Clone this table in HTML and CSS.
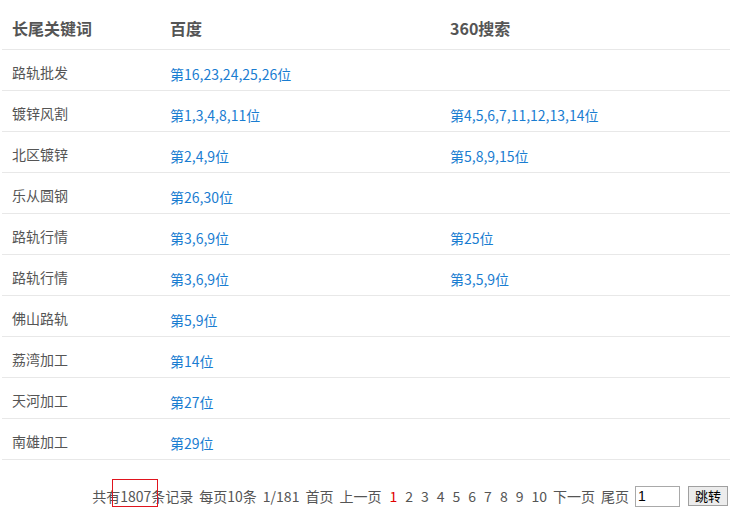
FILE: index.html
```html
<!DOCTYPE html>
<html>
<head>
    <title>长尾关键词排名</title>
    <meta charset="utf-8">
    <link rel="stylesheet" href="styles.css">
</head>
<body>
<table class="rank">
    <thead>
        <tr>
            <th class="col-key">长尾关键词</th>
            <th class="col-bd">百度</th>
            <th class="col-so">360搜索</th>
        </tr>
    </thead>
    <tbody>
        <tr><td>路轨批发</td><td><a href="#">第16,23,24,25,26位</a></td><td></td></tr>
        <tr><td>镀锌风割</td><td><a href="#">第1,3,4,8,11位</a></td><td><a href="#">第4,5,6,7,11,12,13,14位</a></td></tr>
        <tr><td>北区镀锌</td><td><a href="#">第2,4,9位</a></td><td><a href="#">第5,8,9,15位</a></td></tr>
        <tr><td>乐从圆钢</td><td><a href="#">第26,30位</a></td><td></td></tr>
        <tr><td>路轨行情</td><td><a href="#">第3,6,9位</a></td><td><a href="#">第25位</a></td></tr>
        <tr><td>路轨行情</td><td><a href="#">第3,6,9位</a></td><td><a href="#">第3,5,9位</a></td></tr>
        <tr><td>佛山路轨</td><td><a href="#">第5,9位</a></td><td></td></tr>
        <tr><td>荔湾加工</td><td><a href="#">第14位</a></td><td></td></tr>
        <tr><td>天河加工</td><td><a href="#">第27位</a></td><td></td></tr>
        <tr><td>南雄加工</td><td><a href="#">第29位</a></td><td></td></tr>
    </tbody>
</table>

<div class="pager">
    <span>共有<span class="total">1807</span>条记录</span>
    <span>每页10条</span>
    <span>1/181</span>
    <a href="#">首页</a>
    <a href="#">上一页</a>
    <span class="num cur">1</span>
    <a class="num" href="#">2</a>
    <a class="num" href="#">3</a>
    <a class="num" href="#">4</a>
    <a class="num" href="#">5</a>
    <a class="num" href="#">6</a>
    <a class="num" href="#">7</a>
    <a class="num" href="#">8</a>
    <a class="num" href="#">9</a>
    <a class="num" href="#">10</a>
    <a href="#">下一页</a>
    <a href="#">尾页</a>
    <input type="text" class="go-page" value="1">
    <button class="go-btn">跳转</button>
</div>
</body>
</html>
```

FILE: styles.css
```css
* {
    box-sizing: border-box;
}

body {
    margin: 0;
    padding: 0 13px 0 2px;
    font-family: "Noto Sans CJK SC", "Open Sans", sans-serif;
    color: #555;
    background: #fff;
}

.rank {
    width: 728px;
    border-collapse: collapse;
}

.rank th,
.rank td {
    text-align: left;
    padding: 0 10px;
    border-bottom: 1px solid #e8e8e8;
}

.rank th {
    height: 49px;
    font-size: 16px;
    font-weight: bold;
    color: #555;
    padding-top: 8px;
}

.col-key {
    width: 158px;
}

.col-bd {
    width: 280px;
}

.rank td {
    height: 41px;
    font-size: 14px;
    color: #555;
    padding-top: 5px;
}

.rank td a {
    display: inline-block;
    padding-top: 4px;
    font-size: 14px;
    color: #1a7dd1;
    text-decoration: none;
}

.pager {
    margin-top: 26px;
    display: flex;
    justify-content: flex-end;
    align-items: center;
    font-size: 14px;
    color: #555;
    white-space: nowrap;
}

.pager > * {
    margin-left: 6px;
}

.pager > :first-child {
    margin-left: 0;
}

.pager .num {
    margin-left: 8px;
}

.pager a {
    color: #555;
    text-decoration: none;
}

.pager .cur {
    color: #e10000;
}

/* red marker drawn over the record count */
.total {
    position: relative;
}

.total::after {
    content: "";
    position: absolute;
    left: -8px;
    top: -7px;
    width: 44px;
    height: 26px;
    border: 1px solid #e0141e;
}

.go-page {
    width: 45px;
    height: 21px;
    border: 1px solid #a9a9a9;
    padding: 0 2px;
    font-family: "Liberation Sans", sans-serif;
    font-size: 14px;
    color: #000;
}

.go-btn {
    margin-left: 8px;
    width: 40px;
    height: 20px;
    padding: 0;
    border: 1px solid #a0a0a0;
    background: #ececec;
    font-family: "Noto Sans CJK SC", sans-serif;
    font-size: 13px;
    line-height: 18px;
    color: #000;
}
```
